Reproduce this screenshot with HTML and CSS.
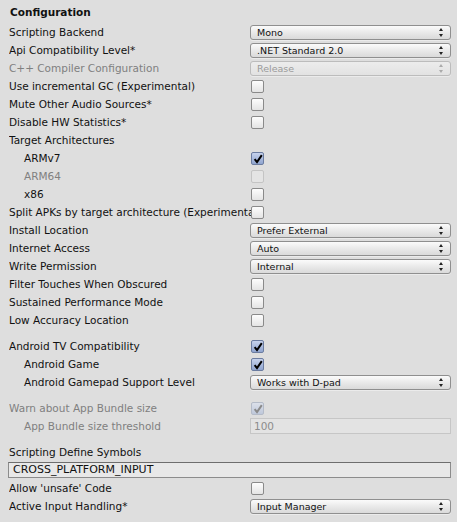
FILE: index.html
```html
<!DOCTYPE html>
<html>
<head>
<meta charset="utf-8">
<link rel="stylesheet" href="styles.css">
</head>
<body>
<div class="panel">
  <div class="header">Configuration</div>

  <div class="row"><div class="label">Scripting Backend</div><div class="ctl"><div class="dd"><span>Mono</span><i class="arr"></i></div></div></div>
  <div class="row"><div class="label">Api Compatibility Level*</div><div class="ctl"><div class="dd"><span>.NET Standard 2.0</span><i class="arr"></i></div></div></div>
  <div class="row dis"><div class="label">C++ Compiler Configuration</div><div class="ctl"><div class="dd off"><span>Release</span><i class="arr"></i></div></div></div>
  <div class="row"><div class="label">Use incremental GC (Experimental)</div><div class="ctl"><div class="cb"></div></div></div>
  <div class="row"><div class="label">Mute Other Audio Sources*</div><div class="ctl"><div class="cb"></div></div></div>
  <div class="row"><div class="label">Disable HW Statistics*</div><div class="ctl"><div class="cb"></div></div></div>
  <div class="row"><div class="label">Target Architectures</div><div class="ctl"></div></div>
  <div class="row"><div class="label ind">ARMv7</div><div class="ctl"><div class="cb on"><svg viewBox="0 0 12 12"><path d="M2.6 6.2 L5 9 L9.8 2.2" fill="none" stroke="#000" stroke-width="2"/></svg></div></div></div>
  <div class="row dis"><div class="label ind">ARM64</div><div class="ctl"><div class="cb off"></div></div></div>
  <div class="row"><div class="label ind">x86</div><div class="ctl"><div class="cb"></div></div></div>
  <div class="row"><div class="label over">Split APKs by target architecture (Experimental)</div><div class="ctl"><div class="cb"></div></div></div>
  <div class="row"><div class="label">Install Location</div><div class="ctl"><div class="dd"><span>Prefer External</span><i class="arr"></i></div></div></div>
  <div class="row"><div class="label">Internet Access</div><div class="ctl"><div class="dd"><span>Auto</span><i class="arr"></i></div></div></div>
  <div class="row"><div class="label">Write Permission</div><div class="ctl"><div class="dd"><span>Internal</span><i class="arr"></i></div></div></div>
  <div class="row"><div class="label">Filter Touches When Obscured</div><div class="ctl"><div class="cb"></div></div></div>
  <div class="row"><div class="label">Sustained Performance Mode</div><div class="ctl"><div class="cb"></div></div></div>
  <div class="row"><div class="label">Low Accuracy Location</div><div class="ctl"><div class="cb"></div></div></div>

  <div class="gap"></div>
  <div class="row"><div class="label">Android TV Compatibility</div><div class="ctl"><div class="cb on"><svg viewBox="0 0 12 12"><path d="M2.6 6.2 L5 9 L9.8 2.2" fill="none" stroke="#000" stroke-width="2"/></svg></div></div></div>
  <div class="row"><div class="label ind">Android Game</div><div class="ctl"><div class="cb on"><svg viewBox="0 0 12 12"><path d="M2.6 6.2 L5 9 L9.8 2.2" fill="none" stroke="#000" stroke-width="2"/></svg></div></div></div>
  <div class="row"><div class="label ind">Android Gamepad Support Level</div><div class="ctl"><div class="dd"><span>Works with D-pad</span><i class="arr"></i></div></div></div>

  <div class="gap"></div>
  <div class="row dis"><div class="label">Warn about App Bundle size</div><div class="ctl"><div class="cb on off"><svg viewBox="0 0 12 12"><path d="M2.6 6.2 L5 9 L9.8 2.2" fill="none" stroke="#8a8a8a" stroke-width="2"/></svg></div></div></div>
  <div class="row dis"><div class="label ind">App Bundle size threshold</div><div class="ctl"><div class="tf off">100</div></div></div>

  <div class="gap"></div>
  <div class="row"><div class="label">Scripting Define Symbols</div></div>
  <div class="row full"><div class="tf wide">CROSS_PLATFORM_INPUT</div></div>
  <div class="row"><div class="label">Allow 'unsafe' Code</div><div class="ctl"><div class="cb"></div></div></div>
  <div class="row"><div class="label">Active Input Handling*</div><div class="ctl"><div class="dd"><span>Input Manager</span><i class="arr"></i></div></div></div>
</div>
</body>
</html>
```

FILE: styles.css
```css
html, body {
  margin: 0;
  padding: 0;
  background: #dedede;
}
.panel {
  width: 457px;
  height: 522px;
  box-sizing: border-box;
  padding: 3px 6px 0 9px;
  font-family: "DejaVu Sans", sans-serif;
  font-size: 10.5px;
  color: #111;
  overflow: hidden;
}
.header {
  height: 18px;
  line-height: 18px;
  font-weight: bold;
  margin-bottom: 2px;
  padding-left: 1px;
}
.row {
  display: flex;
  height: 18px;
  align-items: center;
}
.label {
  width: 241px;
  flex: none;
  white-space: nowrap;
  overflow: hidden;
}
.label.over { overflow: visible; }
.label.ind { padding-left: 15px; box-sizing: border-box; }
.dis .label { color: #808080; }
.ctl {
  flex: 1;
  display: flex;
  align-items: center;
  position: relative;
  z-index: 1;
}
.gap { height: 8px; }
.dd {
  flex: 1;
  height: 13px;
  border: 1px solid #8f8f8f;
  border-radius: 3px;
  background: linear-gradient(#fbfbfb, #e6e6e6 60%, #dadada);
  display: flex;
  align-items: center;
  padding: 0 6px 0 6px;
  font-size: 9.5px;
  color: #111;
  box-shadow: 0 1px 0 rgba(255,255,255,0.4);
}
.dd span { flex: 1; white-space: nowrap; }
.dd.off { border-color: #bcbcbc; color: #9a9a9a; background: linear-gradient(#ececec, #e2e2e2); }
.arr {
  width: 5px;
  height: 9px;
  position: relative;
}
.arr::before, .arr::after {
  content: "";
  position: absolute;
  left: 0;
  border-left: 2.5px solid transparent;
  border-right: 2.5px solid transparent;
}
.arr::before { top: 0; border-bottom: 3.5px solid #222; }
.arr::after { bottom: 0; border-top: 3.5px solid #222; }
.dd.off .arr::before { border-bottom-color: #aaa; }
.dd.off .arr::after { border-top-color: #aaa; }
.cb {
  width: 11px;
  height: 11px;
  border: 1px solid #8a8a8a;
  border-radius: 2px;
  background: linear-gradient(#fdfdfd, #e4e4e4);
  margin-left: 1px;
  position: relative;
}
.cb.off { border-color: #c4c4c4; background: #e4e4e4; }
.cb.on { background: linear-gradient(#c6d2ec, #8fa4cf); border-color: #6b7ca0; }
.cb.on.off { background: linear-gradient(#dbe0ea, #bfc8da); border-color: #b4bbc8; }
.cb svg { position: absolute; left: 0; top: 0; width: 12px; height: 12px; }
.tf {
  flex: 1;
  height: 14px;
  box-sizing: border-box;
  border: 1px solid #a0a0a0;
  border-top-color: #7b7b7b;
  background: #e8e8e8;
  padding-left: 3px;
  line-height: 12px;
  font-size: 10.5px;
}
.tf.off { border-color: #c6c6c6; color: #8c8c8c; background: #e3e3e3; height: 16px; line-height: 14px; }
.tf.wide { margin-left: -1px; height: 16px; line-height: 14px; padding-left: 4px; font-size: 11px; border-color: #8c8c8c; border-top-color: #6e6e6e; }
```
